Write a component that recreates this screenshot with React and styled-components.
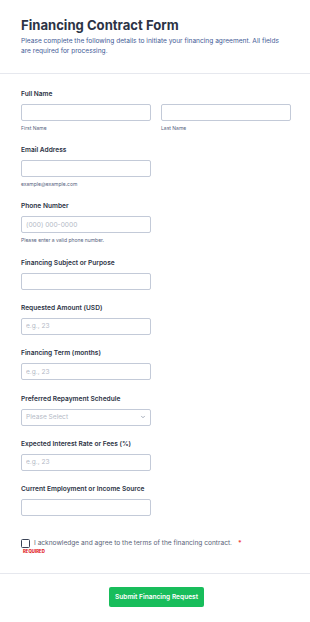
import styled, { createGlobalStyle } from 'styled-components';

const GlobalStyle = createGlobalStyle`
  * { box-sizing: border-box; }
  body {
    margin: 0;
    background: #ffffff;
    font-family: Inter, "Noto Sans", sans-serif;
    color: #2c3345;
  }
`;

const Page = styled.div`
  width: 310px;
  background: #fff;
`;

const Header = styled.header`
  padding: 18px 21px 16px;
  border-bottom: 1px solid #e6e8ee;
`;

const Title = styled.h1`
  margin: 0;
  font-size: 13.1px;
  line-height: 15px;
  font-weight: 700;
  color: #2c3345;
`;

const Subtitle = styled.p`
  margin: 2.75px 0 0;
  font-size: 6.6px;
  line-height: 10.5px;
  color: #3f5b96;
`;

const Body = styled.div`
  padding: 15px 21px 0;
  display: flex;
  flex-direction: column;
  gap: 13.3px;
`;

const Field = styled.div`
  display: flex;
  flex-direction: column;
`;

const Label = styled.label`
  font-size: 6.6px;
  line-height: 10px;
  font-weight: 600;
  color: #2c3345;
  margin-bottom: 5px;
`;

const Row = styled.div`
  display: grid;
  grid-template-columns: 130px 130px;
  column-gap: 10px;
`;

const Input = styled.input`
  width: 130px;
  height: 17px;
  border: 1px solid #c3cad8;
  border-radius: 2px;
  padding: 0 4px;
  font-family: inherit;
  font-size: 6.6px;
  color: #2c3345;
  background: #fff;
  outline: none;

  &::placeholder {
    color: #b4bac6;
  }
`;

const Select = styled.div`
  width: 130px;
  height: 17px;
  border: 1px solid #c3cad8;
  border-radius: 2px;
  padding: 0 4px;
  display: flex;
  align-items: center;
  justify-content: space-between;
  font-size: 6.6px;
  color: #b4bac6;
`;

const Help = styled.span`
  margin-top: 3px;
  font-size: 5px;
  line-height: 8px;
  color: #57647e;
`;

const Check = styled.div`
  margin-top: 9px;
  display: flex;
  flex-direction: column;
`;

const CheckLine = styled.div`
  display: flex;
  align-items: center;
  gap: 4px;
  font-size: 6.6px;
  line-height: 10px;
  color: #5a6478;
`;

const Box = styled.span`
  width: 9px;
  height: 9px;
  border: 1px solid #3a4356;
  border-radius: 1.5px;
  flex-shrink: 0;
`;

const Star = styled.span`
  color: #f23a3c;
  margin-left: 2px;
  font-weight: 700;
`;

const Required = styled.span`
  margin-left: 2px;
  font-size: 4.3px;
  line-height: 7px;
  font-weight: 800;
  color: #e11d25;
  text-transform: uppercase;
`;

const Footer = styled.div`
  margin-top: 18px;
  border-top: 1px solid #e6e8ee;
  padding: 13px 0 16px;
  display: flex;
  justify-content: center;
`;

const Submit = styled.button`
  height: 20px;
  padding: 0 6px;
  border: none;
  border-radius: 2px;
  background: #18bd5b;
  color: #fff;
  font-family: inherit;
  font-size: 6.6px;
  font-weight: 600;
  margin-left: 3px;
`;

function Chevron() {
  return (
    <svg width="6" height="6" viewBox="0 0 24 24" fill="none" stroke="#8a93a6" strokeWidth="3" strokeLinecap="round" strokeLinejoin="round">
      <path d="M6 9l6 6 6-6" />
    </svg>
  );
}

const singles = [
  { label: 'Financing Subject or Purpose' },
  { label: 'Requested Amount (USD)', placeholder: 'e.g., 23' },
  { label: 'Financing Term (months)', placeholder: 'e.g., 23' },
];

export default function App() {
  return (
    <Page>
      <GlobalStyle />
      <Header>
        <Title>Financing Contract Form</Title>
        <Subtitle>
          Please complete the following details to initiate your financing agreement. All fields are required for processing.
        </Subtitle>
      </Header>
      <Body>
        <Field>
          <Label>Full Name</Label>
          <Row>
            <Field>
              <Input />
              <Help>First Name</Help>
            </Field>
            <Field>
              <Input />
              <Help>Last Name</Help>
            </Field>
          </Row>
        </Field>
        <Field>
          <Label>Email Address</Label>
          <Input />
          <Help>example@example.com</Help>
        </Field>
        <Field>
          <Label>Phone Number</Label>
          <Input placeholder="(000) 000-0000" />
          <Help>Please enter a valid phone number.</Help>
        </Field>
        {singles.map(f => (
          <Field key={f.label}>
            <Label>{f.label}</Label>
            <Input placeholder={f.placeholder} />
          </Field>
        ))}
        <Field>
          <Label>Preferred Repayment Schedule</Label>
          <Select>
            Please Select
            <Chevron />
          </Select>
        </Field>
        <Field>
          <Label>Expected Interest Rate or Fees (%)</Label>
          <Input placeholder="e.g., 23" />
        </Field>
        <Field>
          <Label>Current Employment or Income Source</Label>
          <Input />
        </Field>
        <Check>
          <CheckLine>
            <Box />
            I acknowledge and agree to the terms of the financing contract.
            <Star>*</Star>
          </CheckLine>
          <Required>Required</Required>
        </Check>
      </Body>
      <Footer>
        <Submit>Submit Financing Request</Submit>
      </Footer>
    </Page>
  );
}
